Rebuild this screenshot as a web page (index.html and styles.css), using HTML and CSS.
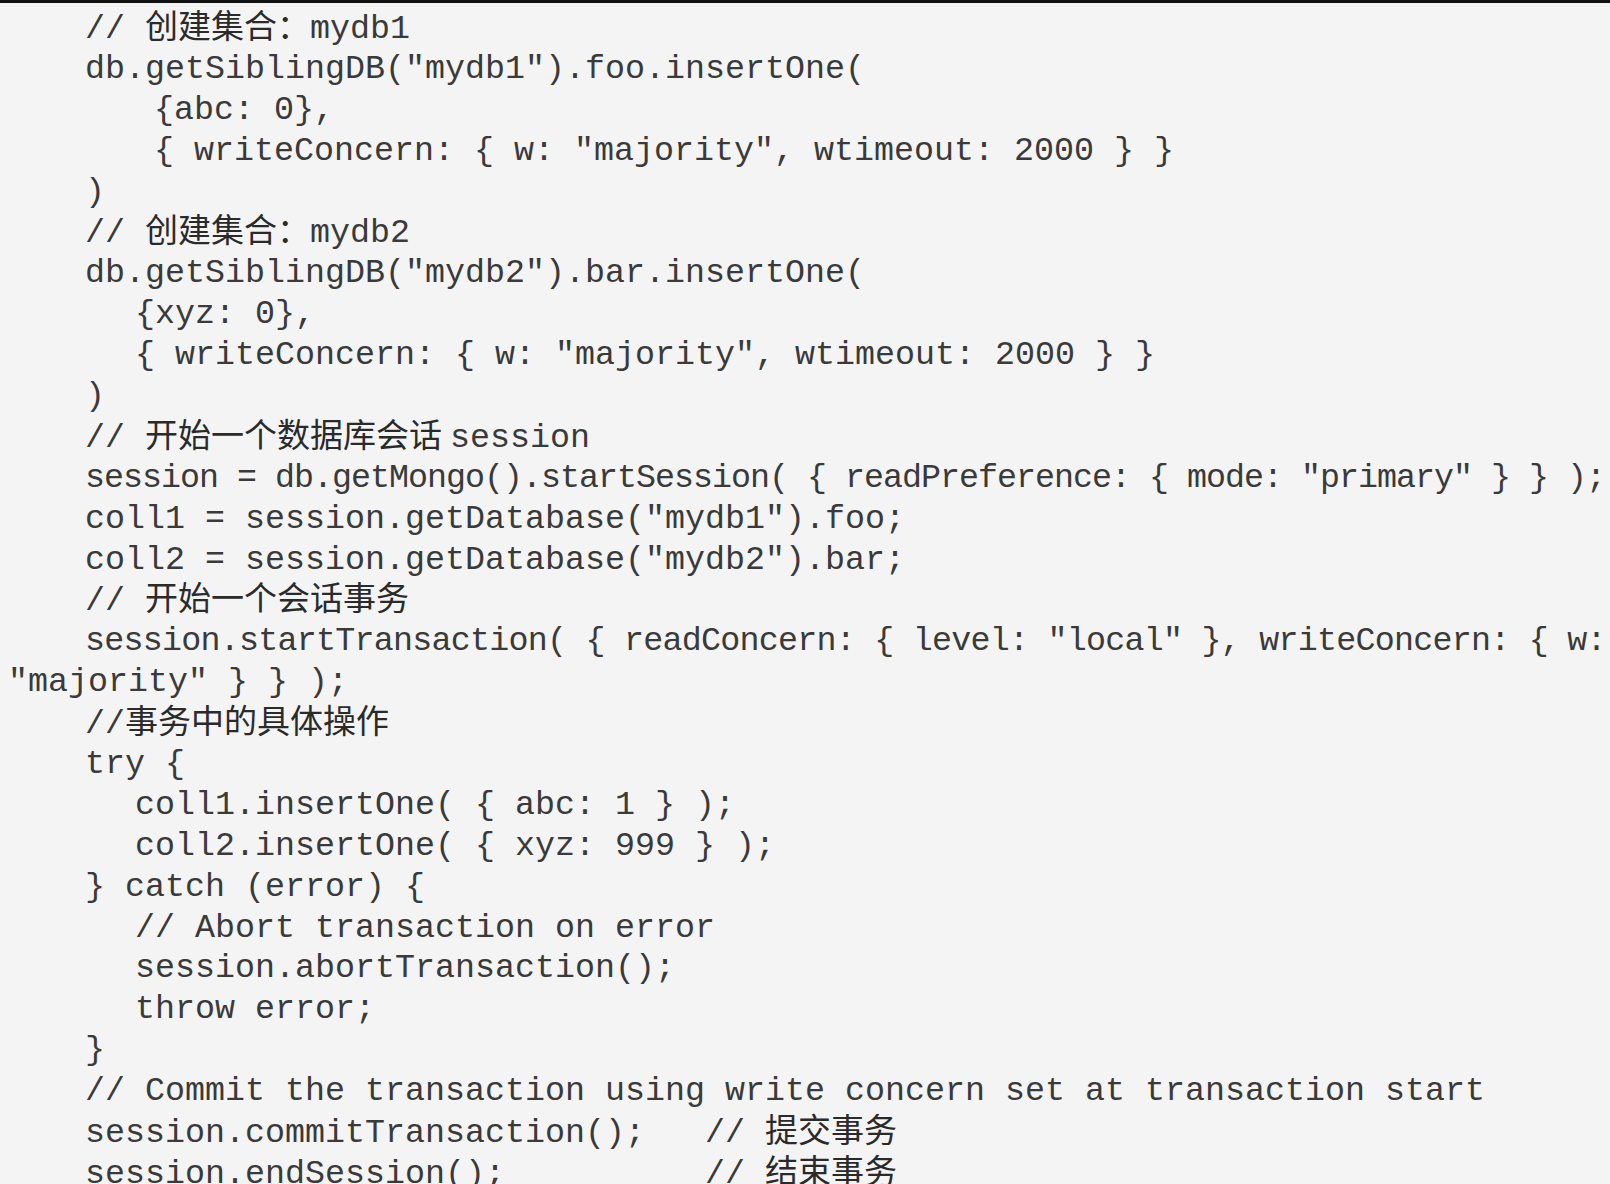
FILE: index.html
```html
<!DOCTYPE html>
<html lang="zh-CN">
<head>
<meta charset="utf-8">
<title>MongoDB transaction</title>
<link rel="stylesheet" href="styles.css">
</head>
<body>
<div class="code">
<div class="ln i1">// <span class="zh">创建集合：</span>mydb1</div>
<div class="ln i1">db.getSiblingDB("mydb1").foo.insertOne(</div>
<div class="ln i2">{abc: 0},</div>
<div class="ln i2">{ writeConcern: { w: "majority", wtimeout: 2000 } }</div>
<div class="ln i1">)</div>
<div class="ln i1">// <span class="zh">创建集合：</span>mydb2</div>
<div class="ln i1">db.getSiblingDB("mydb2").bar.insertOne(</div>
<div class="ln i3">{xyz: 0},</div>
<div class="ln i3">{ writeConcern: { w: "majority", wtimeout: 2000 } }</div>
<div class="ln i1">)</div>
<div class="ln i1">// <span class="zh gap">开始一个数据库会话</span>session</div>
<div class="ln i1 tight">session = db.getMongo().startSession( { readPreference: { mode: "primary" } } );</div>
<div class="ln i1">coll1 = session.getDatabase("mydb1").foo;</div>
<div class="ln i1">coll2 = session.getDatabase("mydb2").bar;</div>
<div class="ln i1">// <span class="zh">开始一个会话事务</span></div>
<div class="ln i1 tight2">session.startTransaction( { readConcern: { level: "local" }, writeConcern: { w:</div>
<div class="ln i0">"majority" } } );</div>
<div class="ln i1">//<span class="zh">事务中的具体操作</span></div>
<div class="ln i1">try {</div>
<div class="ln i3">coll1.insertOne( { abc: 1 } );</div>
<div class="ln i3">coll2.insertOne( { xyz: 999 } );</div>
<div class="ln i1">} catch (error) {</div>
<div class="ln i3">// Abort transaction on error</div>
<div class="ln i3">session.abortTransaction();</div>
<div class="ln i3">throw error;</div>
<div class="ln i1">}</div>
<div class="ln i1">// Commit the transaction using write concern set at transaction start</div>
<div class="ln i1">session.commitTransaction();   // <span class="zh">提交事务</span></div>
<div class="ln i1">session.endSession();          // <span class="zh">结束事务</span></div>
</div>
</body>
</html>
```

FILE: styles.css
```css
html, body {
  margin: 0;
  padding: 0;
  background: #f4f4f4;
}

body {
  border-top: 3px solid #111;
  height: 1181px;
  overflow: hidden;
}

.code {
  padding: 5px 0 0 8px;
  font-family: "Liberation Mono", "Noto Sans CJK SC", monospace;
  font-size: 33.33px;
  line-height: 40.9px;
  color: #3a3a3a;
}

.ln {
  white-space: pre;
  height: 40.9px;
}

.i0 { padding-left: 0; }
.i1 { padding-left: 77px; }
.i2 { padding-left: 146px; }
.i3 { padding-left: 127px; }

.tight { letter-spacing: -1px; }
.tight2 { letter-spacing: -0.75px; }

.zh {
  font-family: "Noto Sans CJK SC", sans-serif;
  font-size: 33px;
  font-weight: 400;
  line-height: 1;
  color: #2a2a2a;
}

.gap { margin-right: 8px; }
```
